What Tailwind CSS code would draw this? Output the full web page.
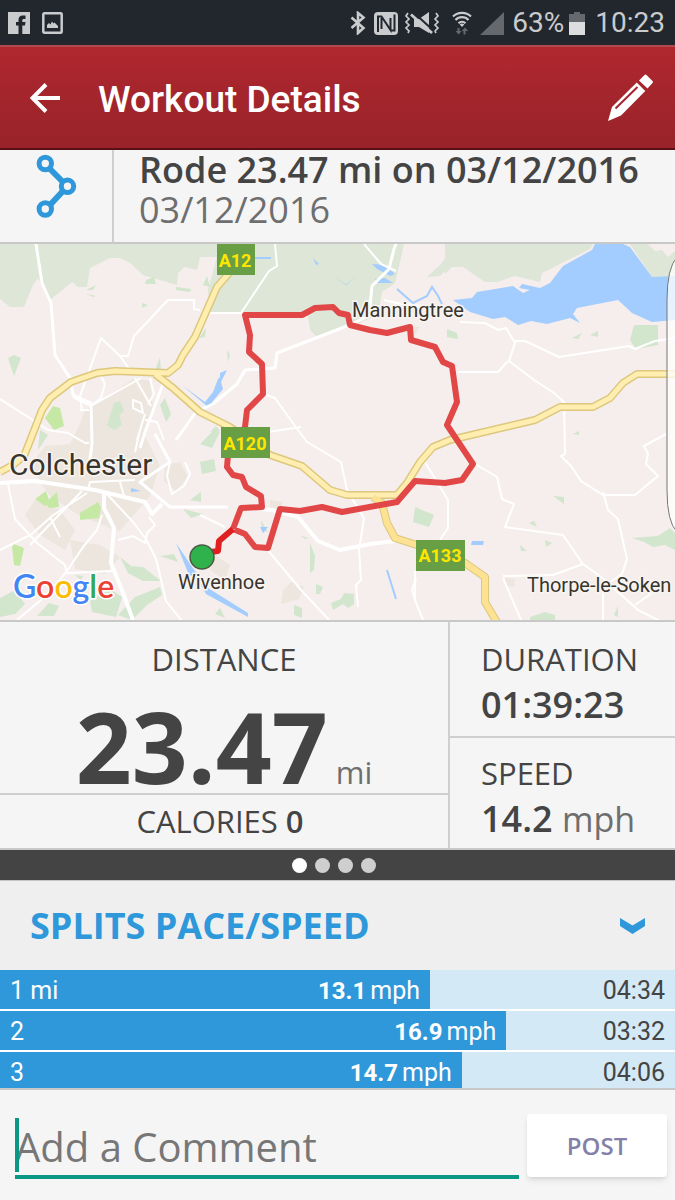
<!DOCTYPE html>
<html lang="en">
  <head>
    <meta charset="UTF-8" />
    <meta name="viewport" content="width=device-width, initial-scale=1.0" />
    <title>Workout Details</title>
    <script src="https://cdn.jsdelivr.net/npm/@tailwindcss/browser@4"></script>
  </head>
  <body class="bg-[#f5f5f5] font-['Open_Sans',sans-serif] text-[#444444]">
    <div class="flex h-screen flex-col overflow-hidden">
      <!-- status bar -->
      <div class="flex h-[45px] shrink-0 items-center bg-[#22272e] pr-[10px] pl-2 font-['Roboto',sans-serif] text-[28px] text-[#c9cbcd]">
        <svg class="h-[22px] w-[22px]" viewBox="0 0 22 22">
          <path fill="#c9cbcd" d="M0 0h22v22H0z" />
          <path fill="#22272e" d="M10.500 22v-8.500H8V10h2.500V8c0-3 1.500-4.500 4-4.500h3V7h-1.800c-1 0-1.400.5-1.400 1.500V10h3.200l-.5 3.500h-2.700V22z" />
        </svg>
        <svg class="ml-3 h-[22px] w-[21px]" viewBox="0 0 21 22">
          <rect x="1.300" y="1.300" width="18.400" height="19.400" rx="1" fill="none" stroke="#c9cbcd" stroke-width="2.500" />
          <path fill="#c9cbcd" d="M5 16v-3l2-2 1.500 1.500L10 9.500l1.500 2 1-1L14 12l2 2v2z" />
        </svg>
        <svg class="ml-auto h-6 w-4" viewBox="0 0 16 24">
          <path fill="none" stroke="#c9cbcd" stroke-width="2.600" d="M1.500 6.500l12 10.500L8 22V2l5.500 4.500L1.500 17" />
        </svg>
        <svg class="ml-2 h-6 w-6" viewBox="0 0 24 24">
          <rect x="0" y="1" width="24" height="23" rx="4" fill="#c9cbcd" />
          <path fill="none" stroke="#22272e" stroke-width="2" d="M4 21V5.500h3.500L16.500 19V7M20.500 3.500v16h-4M7.500 7v11" />
        </svg>
        <svg class="ml-[6px] h-6 w-9" viewBox="0 0 36 24">
          <path fill="none" stroke="#c9cbcd" stroke-width="1.700" d="M4 2L2 5l3 3-3 3 3 3-3 3 3 3-1 2M32 2l2 3-3 3 3 3-3 3 3 3-3 3 1 2" />
          <path fill="#c9cbcd" d="M10 8h5l10-7v21l-10-6h-5z" />
          <path fill="none" stroke="#22272e" stroke-width="2" d="M9 1l21 19" />
          <path fill="none" stroke="#c9cbcd" stroke-width="2.800" d="M7 3.500l21 18.500" />
        </svg>
        <svg class="ml-3 h-6 w-5" viewBox="0 0 20 24">
          <path fill="none" stroke="#c9cbcd" stroke-width="2.200" d="M1 5.500a13 13 0 0 1 18 0M3.500 9a9 9 0 0 1 13 0M6.500 12.200a5 5 0 0 1 7 0" />
          <path fill="#c9cbcd" d="M7.700 13.500a3 3 0 0 1 4.600 0L10 16z" />
          <path fill="#65696e" d="M5.500 17h2v3h2.200l-3.200 3.500L3.500 20h2zM13.500 23.500h-2v-3.500H9.800l3.200-3.500 3.200 3.500h-2.700z" />
        </svg>
        <svg class="ml-2 h-6 w-6" viewBox="0 0 24 24">
          <path fill="#65696e" d="M24 1v23H0z" />
        </svg>
        <span class="ml-2">63%</span>
        <svg class="ml-[5px] h-6 w-4" viewBox="0 0 16 24">
          <path fill="#65696e" d="M5 1h6v2h5v9H0V3h5z" />
          <path fill="#dcdddf" d="M0 11h16v13H0z" />
        </svg>
        <span class="ml-[10px]">10:23</span>
      </div>

      <!-- header -->
      <header class="flex h-[105px] shrink-0 items-center border-t-2 border-b-2 border-t-[#b04a50] border-b-[#5c0f17] bg-linear-to-b from-[#b0272f] to-[#982329] pr-5 pl-[30px] text-white">
        <button type="button" aria-label="Back">
          <svg class="h-[30px] w-[30px]" viewBox="0 0 30 30" fill="none" stroke="#fff" stroke-width="4">
            <path d="M30 15H3M16 1.500L2.500 15 16 28.500" />
          </svg>
        </button>
        <h1 class="ml-[38px] pt-[3px] font-['Roboto',sans-serif] text-[37px] leading-none font-medium">Workout Details</h1>
        <button type="button" aria-label="Edit" class="ml-auto">
          <svg class="h-12 w-12" viewBox="0 0 48 48" fill="#fff">
            <path d="M32 6.500L37.500 1Q38.500 0 39.500 1L45.500 7Q46.500 8 45.500 9L40.500 14.500z" />
            <path d="M29.700 8.500L38.300 17 14 41.500 1 47 5 33z" />
            <path fill="none" stroke="#a5252c" stroke-width="2" d="M8.500 34.500L30.500 13" />
          </svg>
        </button>
      </header>

      <section class="flex h-[94px] shrink-0 border-b-2 border-[#c8c8c8]">
        <div class="w-[114px] border-r-2 border-[#cfcfcf] pt-1 pl-9">
          <svg class="h-[66px] w-[42px]" viewBox="0 0 42 66" fill="none" stroke="#2e98da" stroke-width="5">
            <path d="M14 15L27 28M27 37L14 51" stroke-width="6" />
            <circle cx="9.300" cy="9.500" r="6.200" />
            <circle cx="31.500" cy="32.300" r="6.200" />
            <circle cx="9.300" cy="55" r="6.200" />
          </svg>
        </div>
        <div class="pl-[25px] text-[36px] leading-10 whitespace-nowrap">
          <h2 class="font-semibold">Rode 23.47 mi on 03/12/2016</h2>
          <p class="text-[#6e6e6e]">03/12/2016</p>
        </div>
      </section>

      <!-- map -->
      <svg class="block w-full shrink-0" viewBox="0 244 675 376" role="img" aria-label="Route map">
        <rect y="244" width="675" height="376" fill="#f5eeec" />
        <!-- built-up areas -->
        <g fill="#ede6de">
          <path d="M85 410l20-12 30-20 15 3 3 25-8 30 15 30-10 30-30 35-40-15-30-20-20-30 15-20 25-2 10-20z" />
          <path d="M95 480l30-12 25 15-10 25-30 20-20-10zM165 465l15-3 8 15-12 14-12-10zM35 500l25 10 15 20-10 20-25-15-15-20zM70 540l30 5 20 12-15 17-30-5z" />
          <path d="M283 590l8-8 13 5-5 12-18 5zM270 500l13 2-4 8-9-1zM505 578l10 1-1 8-8-1zM215 555l15 10-5 15-15-10zM408 325l12 2-5 8z" />
        </g>
        <!-- woods -->
        <g fill="#dde6d7">
          <path d="M0 244H404L400 262 395 283 382 292 378 315 352 326 316 336 310 330 308 316 243 313 210 313 208 290 217 257 200 257 197 270 185 267 178 273 177 285 143 275 130 263 120 258 110 258 90 268 87 287 78 287 72 282 50 300 38 278 33 285 24 307 10 307 0 299z" />
          <path d="M445 244H593L590 249 542 273 540 282 515 276 497 282 485 282 463 267 452 267 445 274zM630 244H648L655 251 662 250 668 257 675 251V277H652zM450 252V266L440 276 427 277 440 265z" />
        </g>
        <g fill="#d2e5cd">
          <path d="M8 358l6-3 7 3-7 18zM146 280l8-3 2 7h-11zM176 287l15 2-1 3-14-2zM203 285l4-9 3 11zM86 290l10-5-3 5zM86 294l10 2-3 1zM142 303l6 2-6 3zM155 371l5-14 1 14zM199 338l7-10-1 9zM107 425l7-22 6-2 4 10-5 4 3 10-8 5zM160 405l5-7 6 16-5 8zM227 350l3 5-2 7zM210 432l6-6 4 5z" />
          <path d="M630 340L634 325H658V345L636 349zM572 338l10-5-4 6zM590 335l8-4v6zM447 329l10 4 1 6-11-2zM573 434l6-3v4zM632 538l26-2 12-8 5 5v17l-10-5-12 2-9-5zM553 496l11 1v7zM529 523l5-2 3 6zM520 545l7 6h-6zM545 540l7 3-6 4zM614 615l4-9v11z" />
          <path d="M415 507l19 8-5 12-16-5zM310 543l5 13-1 14-4 3zM316 584l7 3-3 7h-4zM331 603l10-4 3-6 10 1v10l-6 4-5-4-10 6zM294 605l8 3v10l-8-3zM530 617l15-5 10 3v5H530zM300 535l8 3-3 1zM261 520l7 12-6-1z" />
          <path d="M190 500l11-8v10zM183 509l20 5-12 4zM200 462l14-3 2 12-14 3zM200 444l15-15 5 3-8 16zM40 430l8 5-10 15zM120 557l8 16 15 8 18 0-18-14-12-1zM160 556l14-2 4 8zM135 597l25-10 2 8-15 10-15 15-14-5zM90 601l20-12 12 8-6 20-24-5zM0 598l15-8 10 14-10 10-15 3zM37 616l12-13 10 3-5 10zM75 575l8 1-2 4zM215 614l5-6 5 10z" />
        </g>
        <g fill="#c5e8a5">
          <path d="M45 418l8-12 7 2 4 18-10 4z" />
          <path d="M35 499l11-8 4 12-5 3zM45 503l12-11 2 15-10 1zM80 513l18-11 3 6-2 10-19 2zM12 547l2-3 10 4-4 18-6-1z" />
        </g>
        <!-- water -->
        <g fill="#a3ccff">
          <path d="M453 300L472 298 477 292 513 286 523 293 530 290 519 288 522 284 540 288 550 283 563 266 592 250 595 244H623L630 247 652 277 675 276V320L652 322 632 313 618 300 577 308 573 314 580 323 570 318 547 324 531 321 518 325 505 317 493 319 470 312z" />
          <path d="M183 386l22 16 8-10 5-13 9-9-6 12 2 7-15 18zM372 264l12 1 11 9-5 2-13-7zM375 279l10-1 8 5-15 0zM334 277l12 8 9-9-8 9zM313 258l6 6-3 1zM200 583l48 30v4l-42-23zM131 488l10 3-10 1zM176 543l16 24 10 13-13-5zM472 541h12l-1 4h-12zM260 527h8l-5 6zM220 383v-10l7-3-6 8z" />
          <path fill="none" stroke="#a3ccff" stroke-width="2" d="M397 289l16 14 14-7 5-9 6 9 4 8M255 258h16M387 570l9 29" />
        </g>
        <!-- minor roads -->
        <g fill="none" stroke="#fff" stroke-width="2" stroke-linejoin="round">
          <path d="M0 399l28 18 20 13 20 3 17 10 4 0M80 396l21-58 19 18 8 0 6-20 34-36h26v9l6 1M210 313l33 0M120 356l10 14" />
          <path d="M80 396l2 15M91 406l50-28M99 372l6 12-4 14-10 8-18-9M80 410h9M133 400l8 3 2 10-10-5zM135 378l16 28M150 378l4 16-6 10M145 420l12 2 7 18" />
          <path d="M364 244l17 20 15 7M384 300l17 4 25 2M275 244l2 22-8 5-28 42M263 394l12 4 20 28 12 16 34 20 6 28 17 28-5 32 2 30-5 5 2 22M266 548l35 42 28 30M268 432l33-5" />
          <path d="M460 322l25 1 13 7 8-2 9 15-6 18 25 19 20 13 10 9 1 52-4 2 10 10 10 15 22 14 32 0 23-19-12-12 2-10-4-8 22-12M515 341l10 0 34 16 70-11 6 3 20-8 20-3M458 372h40l10-11" />
          <path d="M475 464l22 13 5 22 12 5-9 23 58 8 20 29-30 11-50 1M583 564l25 18 10 10 20 18 24 12M603 585v35M635 605l20-14M503 578l18 42M603 492l5 18 10 9 9 40-5 15-12 8M425 462l23 38v28l-8 12M415 600l-3-10 4-12M415 571v29l8 20" />
          <path d="M0 550l32-16 20-18 35-23M8 484l7 35 22 24 28 22 2 9M30 545l52-54M50 517l10 20M102 515l-5 15-14 17-16 24M67 571l-20 24-30 25M67 573l45-2M88 490l2-8 45-2M120 482l4 14M105 492l28 30 13 17 10 20 3 12 7 30 16 20M118 540l15-4 12 7 2-10 8-8-6-8M137 440l8-26M140 430l-5 22M170 462l-3 14 5 18 12-8 6-12-5-12M200 515l25 12" />
        </g>
        <!-- main roads -->
        <g fill="none" stroke="#fff" stroke-width="4" stroke-linejoin="round">
          <path d="M36 244l6 39 9 20 4 52 15 23 3 17 18 8 1 41-4 30M163 384l-18 48-5 16M155 434l15 28-30 20 30 25h58M176 440l20-28 17-8 24-20 8-14 30-2 2-15 70-27 22-10 3-30 17-17 5-20 5-13" stroke-width="3" />
          <path d="M0 483l35-2 60 9 50 12 7 12 10-10M248 508l25 2 25 7 20 24 22 9 30-6 25-3M104 492v16l10 20-3 35 12 30 10 27" />
        </g>
        <!-- trunk roads -->
        <g fill="none" stroke-linejoin="round">
          <g stroke="#dcc77c" stroke-width="8">
            <path d="M0 472L13 465 24 456 30 441 42 410 50 398 71 382 97 373 115 371 168 373 178 365 183 355 195 337 217 287 230 272 240 262" />
            <path d="M155 374L173 388 200 412 230 427 270 455 302 466 330 490 347 495H397L407 483 420 462 433 447 450 440 535 420 560 407H593L610 398 623 383 637 374H675" />
            <path d="M373 497L382 503 387 523 395 538 417 545 465 563 485 577V602L498 624" />
          </g>
          <g stroke="#ffeeb0" stroke-width="5">
            <path d="M0 472L13 465 24 456 30 441 42 410 50 398 71 382 97 373 115 371 168 373 178 365 183 355 195 337 217 287 230 272 240 262" />
            <path d="M155 374L173 388 200 412 230 427 270 455 302 466 330 490 347 495H397L407 483 420 462 433 447 450 440 535 420 560 407H593L610 398 623 383 637 374H675" />
            <path d="M373 497L382 503 387 523 395 538 417 545 465 563 485 577V602L498 624" stroke="#fde293" stroke-width="6" />
          </g>
        </g>
        <!-- ridden route -->
        <path fill="none" stroke="#e14747" stroke-width="6" stroke-linejoin="round" d="M233 529L241 508 262 507 261 496 246 487 242 477 233 475 227 467 228 455 245 427 247 410 263 394 262 364 249 352 250 335 245 315 302 315 315 308 333 307 339 313 348 315 350 325 370 330 387 333 410 327 411 340 435 347 443 362 452 366 457 402 447 425 473 464 462 480 445 483 415 481 397 502 342 512 322 507 300 511 280 509 268 548 255 547 245 534 233 529" />
        <path fill="none" stroke="#e02020" stroke-width="6" stroke-linejoin="round" d="M233 529L219 541 218 551 203 553" />
        <circle cx="202" cy="557" r="12" fill="#2fb24c" stroke="#4a5a44" stroke-width="1.500" />
        <!-- road shields -->
        <g fill="#689f45">
          <rect x="217" y="244" width="38" height="31" />
          <rect x="221" y="427" width="49" height="31" />
          <rect x="416" y="540" width="49" height="31" />
        </g>
        <g class="font-['Roboto',sans-serif] text-[18px] font-bold" fill="#ffe600" text-anchor="middle">
          <text x="235" y="267">A12</text>
          <text x="245" y="450">A120</text>
          <text x="440" y="562">A133</text>
        </g>
        <g class="font-['Roboto',sans-serif] text-[20px]" fill="#38352c" stroke="#f8f4f2" stroke-width="3" paint-order="stroke">
          <text x="352" y="317">Manningtree</text>
          <text x="178" y="589">Wivenhoe</text>
          <text x="527" y="592">Thorpe-le-Soken</text>
          <text x="9" y="475" class="text-[30px]">Colchester</text>
        </g>
        <text x="13" y="598" class="font-['Lato',sans-serif] text-[32px] font-semibold" stroke="#fff" stroke-width="3" paint-order="stroke"><tspan fill="#4285f4">G</tspan><tspan fill="#ea4335">o</tspan><tspan fill="#fbbc05">o</tspan><tspan fill="#4285f4">g</tspan><tspan fill="#34a853">l</tspan><tspan fill="#ea4335">e</tspan></text>
        <!-- edge panel handle -->
        <path fill="#fff" fill-opacity=".75" stroke="#777" stroke-width="1" d="M677 257Q667 268 667 300V490Q667 522 677 532" />
      </svg>

      <!-- stats -->
      <section class="grid h-[230px] shrink-0 grid-cols-[2fr_1fr] border-t-2 border-b-2 border-[#c8c8c8]">
        <div class="flex flex-col border-r-2 border-[#cfcfcf]">
          <div class="h-[173px] border-b-2 border-[#cfcfcf] pt-[15px] text-center">
            <h3 class="text-[31px] leading-[45px]">DISTANCE</h3>
            <p class="mt-4 text-[98px] leading-[96px] font-bold whitespace-nowrap">
              23.47<span class="ml-2 text-[31px] font-normal text-[#6e6e6e]">mi</span>
            </p>
          </div>
          <p class="flex flex-1 items-center justify-center gap-2 pr-2 text-[31px] leading-none">CALORIES <b class="font-semibold">0</b></p>
        </div>
        <div class="grid grid-rows-[116px_1fr] whitespace-nowrap">
          <div class="border-b-2 border-[#cfcfcf] pt-[15px] pl-[31px]">
            <h3 class="text-[31px] leading-[45px]">DURATION</h3>
            <p class="text-[36px] leading-[45px] font-semibold">01:39:23</p>
          </div>
          <div class="pt-[13px] pl-[31px]">
            <h3 class="text-[31px] leading-[45px]">SPEED</h3>
            <p class="text-[36px] leading-[45px] font-semibold">14.2 <span class="text-[34px] font-normal text-[#6e6e6e]">mph</span></p>
          </div>
        </div>
      </section>

      <nav class="flex h-[30px] shrink-0 items-center justify-center gap-2 bg-[#444444] pr-[7px]">
        <button type="button" aria-label="Page 1" class="size-[15px] rounded-full bg-white"></button>
        <button type="button" aria-label="Page 2" class="size-[15px] rounded-full bg-[#cfcfcf]"></button>
        <button type="button" aria-label="Page 3" class="size-[15px] rounded-full bg-[#cfcfcf]"></button>
        <button type="button" aria-label="Page 4" class="size-[15px] rounded-full bg-[#cfcfcf]"></button>
      </nav>

      <!-- splits -->
      <section class="min-h-0 flex-1 overflow-hidden bg-white">
        <button type="button" class="flex h-[90px] w-full items-center justify-between border-t border-[#c4c4c4] bg-[#efefef] px-[30px] text-[36px] font-bold text-[#2e98da]">
          SPLITS PACE/SPEED
          <svg class="h-4 w-[25px]" viewBox="0 0 25 16" fill="#2e98da">
            <path d="M0 0L12.500 7.500 25 0V8L12.500 16 0 8z" />
          </svg>
        </button>
        <table class="block w-full font-['Roboto',sans-serif] text-[25px] leading-9">
          <tbody class="block">
            <tr class="flex border-b-2 border-white bg-[#d3e9f6]">
              <th scope="row" class="relative -mr-20 w-20 pt-[3px] pl-[10px] text-left font-normal text-white">1 mi</th>
              <td class="bg-[#2e98da] pt-[3px] pr-[10px] text-right text-white" style="width: 63.7%"><b class="text-[24px]">13.1</b><span class="ml-1">mph</span></td>
              <td class="flex-1 pt-[3px] pr-[10px] text-right">04:34</td>
            </tr>
            <tr class="flex border-b-2 border-white bg-[#d3e9f6]">
              <th scope="row" class="relative -mr-20 w-20 pt-[3px] pl-[10px] text-left font-normal text-white">2</th>
              <td class="bg-[#2e98da] pt-[3px] pr-[10px] text-right text-white" style="width: 75%"><b class="text-[24px]">16.9</b><span class="ml-1">mph</span></td>
              <td class="flex-1 pt-[3px] pr-[10px] text-right">03:32</td>
            </tr>
            <tr class="flex border-b-2 border-white bg-[#d3e9f6]">
              <th scope="row" class="relative -mr-20 w-20 pt-[3px] pl-[10px] text-left font-normal text-white">3</th>
              <td class="bg-[#2e98da] pt-[3px] pr-[10px] text-right text-white" style="width: 68.4%"><b class="text-[24px]">14.7</b><span class="ml-1">mph</span></td>
              <td class="flex-1 pt-[3px] pr-[10px] text-right">04:06</td>
            </tr>
          </tbody>
        </table>
      </section>

      <!-- comment box -->
      <form class="flex h-28 shrink-0 items-start gap-2 border-t-2 border-[#c8c8c8] pt-6 pr-2 pl-[15px]">
        <div class="relative min-w-0 flex-1">
          <input
            type="text"
            aria-label="Add a Comment"
            placeholder="Add a Comment"
            class="mt-1 h-[61px] w-full border-b-4 border-[#0a9783] bg-transparent text-[40px] placeholder:text-[#777777] focus:outline-none"
          />
          <span class="absolute top-1 left-0 h-[54px] w-1 bg-[#0a9783]"></span>
        </div>
        <button type="submit" class="h-[63px] w-[140px] rounded bg-white text-[24px] font-semibold text-[#8480a8] shadow-md">POST</button>
      </form>
    </div>
  </body>
</html>
